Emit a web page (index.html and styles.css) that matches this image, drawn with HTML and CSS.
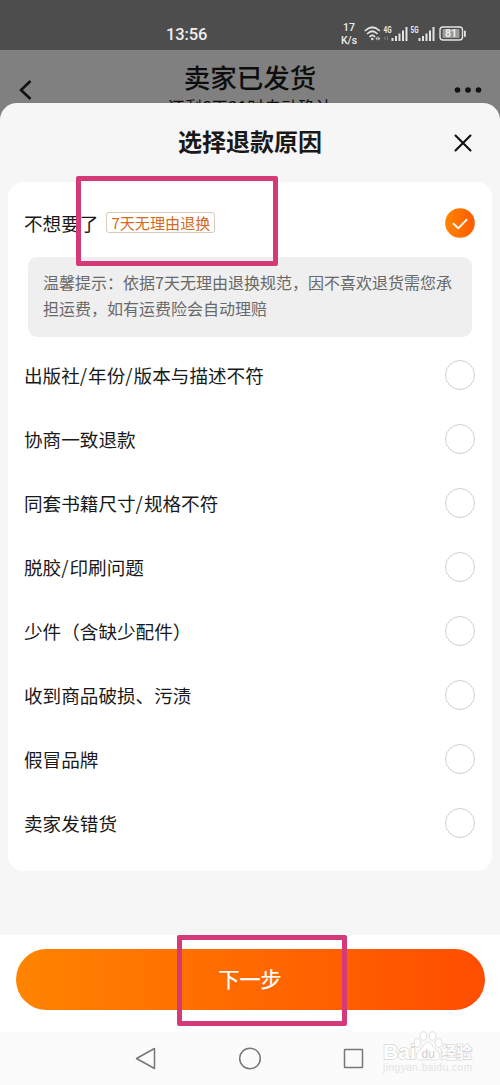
FILE: index.html
```html
<!DOCTYPE html>
<html lang="zh-CN">
<head>
<meta charset="utf-8">
<title>选择退款原因</title>
<link rel="stylesheet" href="styles.css">
</head>
<body>
<div class="phone">
  <header class="status">
    <span class="time">13:56</span>
    <span class="speed"><span>17</span><span>K/s</span></span>
    <svg class="status-icons" width="104" height="24" viewBox="0 0 104 24">
      <g fill="none" stroke="#e4e4e4" stroke-width="1.7" stroke-linecap="round">
        <path d="M1.300 8.500q7-6.500 14 0M3.600 11.500q4.700-4.500 9.400 0M6 14.500q2.300-2.200 4.600 0"/>
        <rect x="76" y="5" width="22.500" height="13" rx="3" stroke-width="1.400"/>
      </g>
      <circle cx="8.300" cy="17" r="1.200" fill="#e4e4e4"/>
      <path d="M11.500 16.500l2-2v4zM14.300 14.500l2 2-2 2z" fill="#d2d2d2"/>
      <g fill="#e4e4e4">
        <path d="M27.500 16h2v3h-2zM31 14h2v5h-2zM34.500 11.500h2v7.500h-2zM38 8.500h2v10.500h-2zM41.500 5h2v14h-2z"/>
        <path d="M54.500 16h2v3h-2zM58 14h2v5h-2zM61.500 11.500h2v7.500h-2zM65 8.500h2v10.500h-2zM68.500 5h2v14h-2z"/>
        <rect x="100" y="8.500" width="1.800" height="6.500" rx=".8"/>
      </g>
      <path d="M21 14.500v3.500m2.500-3.500v3.500" stroke="#808080" fill="none"/>
      <rect x="78.500" y="7" width="17" height="9" rx="1" fill="#999"/>
      <g fill="#eee" font-family="Roboto, sans-serif" font-weight="700">
        <text x="19.500" y="11" font-size="9" textLength="8" lengthAdjust="spacingAndGlyphs">4G</text>
        <text x="46.500" y="11" font-size="9" textLength="8" lengthAdjust="spacingAndGlyphs">5G</text>
        <text x="81" y="15.300" font-size="10.500">81</text>
      </g>
    </svg>
  </header>
  <div class="order">
    <svg class="back" width="16" height="22" viewBox="0 0 16 22"><path d="M13.500 2L4 11l9.500 9" fill="none" stroke="#111" stroke-width="2.600"/></svg>
    <div class="order-text"><h1>卖家已发货</h1><p>还剩6天21时自动确认</p></div>
    <svg class="more" width="28" height="8" viewBox="0 0 28 8"><g fill="#111"><circle cx="3.500" cy="4" r="2.800"/><circle cx="14" cy="4" r="2.800"/><circle cx="24.500" cy="4" r="2.800"/></g></svg>
  </div>
  <main class="sheet">
    <div class="sheet-head">
      <h2>选择退款原因</h2>
      <svg class="close" width="18" height="18" viewBox="0 0 18 18"><path d="M1.500 1.500l15 15m0-15l-15 15" stroke="#111" stroke-width="2.100" stroke-linecap="round"/></svg>
    </div>
    <section class="card">
      <div class="row first">
        <span>不想要了</span><span class="tag">7天无理由退换</span>
        <svg class="checked" width="30" height="30" viewBox="0 0 30 30">
          <defs><linearGradient id="on"><stop stop-color="#ff8500"/><stop offset="1" stop-color="#ff5a00"/></linearGradient></defs>
          <circle cx="15" cy="15" r="14.800" fill="url(#on)"/><path d="M8.500 15.800l4.700 4.500 8.300-8.500" fill="none" stroke="#fff" stroke-width="1.900" stroke-linecap="round" stroke-linejoin="round"/>
        </svg>
      </div>
      <p class="tip">温馨提示：依据7天无理由退换规范，因不喜欢退货需您承担运费，如有运费险会自动理赔</p>
      <div class="row"><span>出版社<b class="slash">/</b>年份<b class="slash">/</b>版本与描述不符</span><i class="radio"></i></div>
      <div class="row"><span>协商一致退款</span><i class="radio"></i></div>
      <div class="row"><span>同套书籍尺寸<b class="slash">/</b>规格不符</span><i class="radio"></i></div>
      <div class="row"><span>脱胶<b class="slash">/</b>印刷问题</span><i class="radio"></i></div>
      <div class="row"><span>少件（含缺少配件）</span><i class="radio"></i></div>
      <div class="row"><span>收到商品破损、污渍</span><i class="radio"></i></div>
      <div class="row"><span>假冒品牌</span><i class="radio"></i></div>
      <div class="row"><span>卖家发错货</span><i class="radio"></i></div>
    </section>
  </main>
  <footer class="action"><button class="next">下一步</button></footer>
  <nav class="nav">
    <svg width="230" height="26" viewBox="0 0 230 26"><g fill="none" stroke="#777" stroke-width="1.500" stroke-linejoin="round"><path d="M19.500 3.500v20L1.500 13.500z"/><circle cx="115" cy="13.500" r="10.300"/><rect x="209.500" y="4.500" width="18" height="18" rx=".5"/></g></svg>
  </nav>
  <svg class="watermark" width="100" height="48" viewBox="0 0 100 48">
    <g fill="#fff" stroke="#d6d6d6" stroke-width="1.400" paint-order="stroke">
      <text x="2" y="29" font-family="Liberation Sans, sans-serif" font-size="20" font-weight="700" textLength="33" lengthAdjust="spacingAndGlyphs">Bai</text>
      <text x="60" y="28" font-family="Noto Sans CJK SC, sans-serif" font-size="15.500" font-weight="700">经验</text>
    </g>
    <g fill="#fff" stroke="#d9d9d9" stroke-width=".8">
      <ellipse cx="36.500" cy="13" rx="3.300" ry="4.300"/><ellipse cx="42.500" cy="6" rx="3.300" ry="4.300"/><ellipse cx="51.500" cy="6" rx="3.300" ry="4.300"/><ellipse cx="57.500" cy="13" rx="3.300" ry="4.300"/>
      <path d="M47 12c-4 0-5 5-8 8-6 5-4 11 2 10q6-1 12 0c6 1 8-5 2-10-4-3-4-8-8-8z"/>
    </g>
    <text x="40.500" y="27.500" font-family="Liberation Sans, sans-serif" font-size="12" fill="#ccc">du</text>
    <text x="2" y="40.500" font-family="Liberation Sans, sans-serif" font-size="10" fill="#e2e2e2" textLength="89">jingyan.baidu.com</text>
  </svg>
  <div class="mark mark-tag"></div>
  <div class="mark mark-next"></div>
</div>
</body>
</html>
```
FILE: styles.css
```css
* { box-sizing: border-box; }
body { margin: 0; font-family: "Noto Sans CJK SC", sans-serif; color: #191919; }
h1, h2, p { margin: 0; }
.phone { position: relative; width: 500px; height: 1085px; overflow: hidden; display: flex; flex-direction: column; background: #808080; }
.status { flex: 0 0 50px; display: flex; align-items: flex-start; background: #4d4d4d; color: #eee; }
.time { width: 174px; margin-left: 166px; padding-top: 24px; font: 500 16.5px/21px Roboto, sans-serif; letter-spacing: -.1px; }
.speed { width: 18px; margin-top: 22px; display: flex; flex-direction: column; align-items: center; font: 500 10.5px/12.5px Roboto, sans-serif; }
.status-icons { margin: 22px 0 0 6px; }
.order { flex: 0 0 53px; min-height: 0; display: flex; justify-content: space-between; align-items: flex-start; padding: 0 18px 0 17px; color: #0d0d0d; }
.back { margin-top: 29px; flex: none; }
.more { margin-top: 36px; flex: none; }
.order-text { display: flex; flex-direction: column; align-items: center; margin-left: 13px; white-space: nowrap; }
.order-text h1 { font-size: 26.5px; line-height: 30px; padding-top: 12px; font-weight: 500; }
.order-text p { font-size: 17px; line-height: 24px; margin-top: 3px; }
.sheet { position: relative; flex: 0 0 832px; padding: 0 8px; background: #f6f6f6; border-radius: 17px 17px 0 0; }
.sheet-head { height: 79px; position: relative; display: flex; justify-content: center; }
.sheet-head h2 { font-size: 24px; line-height: 36px; padding-top: 20px; font-weight: 700; }
.close { position: absolute; right: 20px; top: 31px; }
.card { height: 689px; padding: 9px 17px 0 16px; border-radius: 15px; background: #fff; }
.row { height: 64px; display: flex; align-items: center; font-size: 18.6px; line-height: 28px; }
.row > :last-child { margin-left: auto; }
.slash { font-weight: 400; letter-spacing: 1px; }
.tag { margin-left: 8px; height: 21px; padding: 0 4px; border: 1px solid #dccab8; border-radius: 3px; color: #d46a20; font-size: 15.1px; line-height: 18px; }
.tip { height: 80px; margin: 2px 3px 6px 4px; padding: 12px 15px; border-radius: 9px; background: #efefef; color: #696969; font-size: 16px; line-height: 26px; }
.radio { width: 30px; height: 30px; border: 1px solid #d0d0d0; border-radius: 50%; }
.first { padding-bottom: 1px; }
.action { flex: 0 0 97px; padding: 14px 15.5px; background: #fff; }
.next { display: block; width: 100%; height: 61px; padding: 0 0 3px; border: 0; border-radius: 31px; background: linear-gradient(90deg, #ff8400, #ff4d00); color: #fff; font: 400 21px/30px "Noto Sans CJK SC", sans-serif; -webkit-text-stroke: .25px #fff; }
.nav { flex: 1; display: flex; justify-content: center; padding-top: 13px; background: #fbfbfb; }
.watermark { position: absolute; left: 381px; top: 1030px; }
.mark { position: absolute; border: 5px solid #d33a77; border-radius: 2px; }
.mark-tag { left: 76px; top: 176px; width: 202px; height: 90px; }
.mark-next { left: 177px; top: 935px; width: 170px; height: 91px; }
```
